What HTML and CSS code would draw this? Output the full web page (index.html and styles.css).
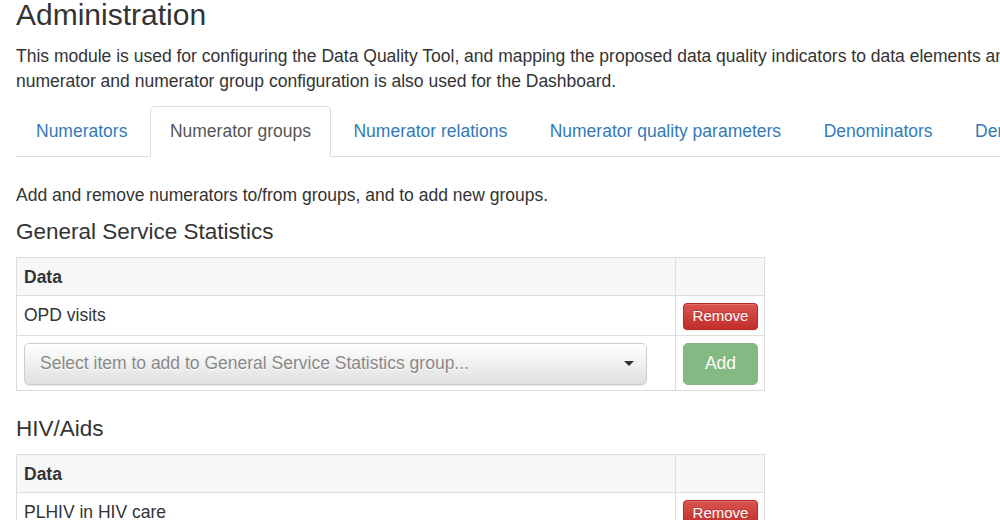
FILE: index.html
```html
<!DOCTYPE html>
<html lang="en">
<head>
<meta charset="utf-8">
<title>Administration</title>
<link rel="stylesheet" href="styles.css">
</head>
<body>
<div class="page">
  <h1 class="title">Administration</h1>
  <p class="intro">This module is used for configuring the Data Quality Tool, and mapping the proposed data quality indicators to data elements and datasets in the database. The<br>numerator and numerator group configuration is also used for the Dashboard.</p>

  <ul class="tabs">
    <li class="tab"><a class="tab-link">Numerators</a></li>
    <li class="tab tab-active"><a class="tab-link">Numerator groups</a></li>
    <li class="tab"><a class="tab-link">Numerator relations</a></li>
    <li class="tab"><a class="tab-link">Numerator quality parameters</a></li>
    <li class="tab"><a class="tab-link">Denominators</a></li>
    <li class="tab"><a class="tab-link">Denominator relations</a></li>
    <li class="tab"><a class="tab-link">External data comparison</a></li>
  </ul>

  <div class="tab-pane">
    <p class="pane-text">Add and remove numerators to/from groups, and to add new groups.</p>

    <h4 class="group-title">General Service Statistics</h4>
    <table class="grid">
      <thead>
        <tr><th class="col-data">Data</th><th class="col-action"></th></tr>
      </thead>
      <tbody>
        <tr>
          <td>OPD visits</td>
          <td><button class="btn btn-remove" type="button">Remove</button></td>
        </tr>
        <tr>
          <td>
            <div class="picker">
              <span class="picker-placeholder">Select item to add to General Service Statistics group...</span>
              <span class="caret"></span>
            </div>
          </td>
          <td><button class="btn btn-add" type="button" disabled>Add</button></td>
        </tr>
      </tbody>
    </table>

    <h4 class="group-title">HIV/Aids</h4>
    <table class="grid">
      <thead>
        <tr><th class="col-data">Data</th><th class="col-action"></th></tr>
      </thead>
      <tbody>
        <tr>
          <td>PLHIV in HIV care</td>
          <td><button class="btn btn-remove" type="button">Remove</button></td>
        </tr>
        <tr>
          <td>PLHIV on ART</td>
          <td><button class="btn btn-remove" type="button">Remove</button></td>
        </tr>
      </tbody>
    </table>
  </div>
</div>
</body>
</html>
```

FILE: styles.css
```css
html, body {
  margin: 0;
  padding: 0;
}

body {
  font-family: "Liberation Sans", Arial, Helvetica, sans-serif;
  font-size: 17.5px;
  line-height: 25px;
  color: #333333;
  background: #ffffff;
  overflow: hidden;
}

.page {
  padding: 0 16px;
  width: 1500px;
}

.title {
  font-size: 30px;
  font-weight: normal;
  line-height: 1.1;
  margin: -2px 0 12.5px;
}

.intro {
  margin: 0 0 12.5px;
  white-space: nowrap;
}

/* tabs */
.tabs {
  list-style: none;
  margin: 0;
  padding: 0;
  display: flex;
  flex-wrap: nowrap;
  border-bottom: 1px solid #dddddd;
}

.tab {
  margin-right: 2.5px;
  margin-bottom: -1px;
  flex: none;
}

.tab-link {
  display: block;
  padding: 12px 19px;
  line-height: 25px;
  border: 1px solid transparent;
  border-radius: 5px 5px 0 0;
  color: #337ab7;
  white-space: nowrap;
  cursor: pointer;
}

.tab-active .tab-link {
  color: #555555;
  background: #ffffff;
  border-color: #dddddd #dddddd transparent;
}

/* pane */
.tab-pane {
  padding-top: 25.5px;
}

.pane-text {
  margin: 0 0 12.5px;
}

.group-title {
  font-size: 22.5px;
  font-weight: normal;
  line-height: 1.1;
  margin: 12.5px 0;
}

.grid {
  width: 749px;
  border-collapse: collapse;
  border-spacing: 0;
  border: 1px solid #dddddd;
  margin-bottom: 26px;
}

.grid th,
.grid td {
  border: 1px solid #dddddd;
  padding: 7px 6px 5px 7px;
  line-height: 25px;
  vertical-align: top;
  text-align: left;
}

.grid thead th {
  background: #f7f7f7;
  font-weight: bold;
}

.col-data {
  width: auto;
}

.col-action {
  width: 75px;
}

/* buttons */
.btn {
  display: block;
  width: 100%;
  font-family: inherit;
  color: #ffffff;
  text-align: center;
  border: 1px solid transparent;
  cursor: pointer;
  text-shadow: 0 -1px 0 rgba(0, 0, 0, 0.2);
}

.btn-remove {
  font-size: 15px;
  line-height: 22.5px;
  padding: 1px 6px;
  border-radius: 4px;
  background-color: #c9302c;
  background-image: linear-gradient(to bottom, #d9534f 0, #c12e2a 100%);
  border-color: #b92c28;
  box-shadow: inset 0 1px 0 rgba(255, 255, 255, 0.15), 0 1px 1px rgba(0, 0, 0, 0.075);
}

.btn-add {
  font-size: 17.5px;
  line-height: 25px;
  padding: 7.5px 15px;
  border-radius: 5px;
  background-color: #419641;
  background-image: none;
  border-color: #3e8f3e;
  opacity: 0.65;
  cursor: not-allowed;
  box-shadow: none;
}

/* select */
.picker {
  width: 623px;
  box-sizing: border-box;
  display: flex;
  align-items: center;
  justify-content: space-between;
  padding: 7.5px 12px 7.5px 15px;
  border: 1px solid #cccccc;
  border-radius: 5px;
  background-image: linear-gradient(to bottom, #ffffff 0, #e0e0e0 100%);
  box-shadow: inset 0 1px 0 rgba(255, 255, 255, 0.15), 0 1px 1px rgba(0, 0, 0, 0.075);
  text-shadow: 0 1px 0 #ffffff;
}

.picker-placeholder {
  color: #888888;
  line-height: 25px;
  white-space: nowrap;
}

.caret {
  width: 0;
  height: 0;
  border-top: 5px solid #333333;
  border-left: 5px solid transparent;
  border-right: 5px solid transparent;
}
```
